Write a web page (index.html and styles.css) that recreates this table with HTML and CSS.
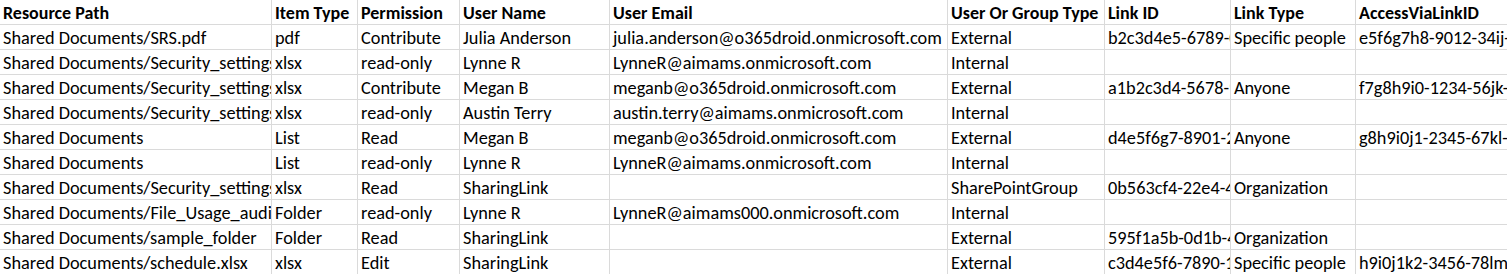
FILE: index.html
```html
<!DOCTYPE html>
<html lang="en">
<head>
    <meta charset="UTF-8">
    <title>Sharing Report</title>
    <link rel="stylesheet" href="styles.css">
</head>
<body>
    <table class="sheet">
        <colgroup>
            <col class="c-path">
            <col class="c-type">
            <col class="c-perm">
            <col class="c-name">
            <col class="c-email">
            <col class="c-group">
            <col class="c-link">
            <col class="c-ltype">
            <col class="c-access">
        </colgroup>
        <thead>
            <tr>
                <th>Resource Path</th>
                <th>Item Type</th>
                <th>Permission</th>
                <th>User Name</th>
                <th>User Email</th>
                <th>User Or Group Type</th>
                <th>Link ID</th>
                <th>Link Type</th>
                <th>AccessViaLinkID</th>
            </tr>
        </thead>
        <tbody>
            <tr>
                <td>Shared Documents/SRS.pdf</td>
                <td>pdf</td>
                <td>Contribute</td>
                <td>Julia Anderson</td>
                <td>julia.anderson@o365droid.onmicrosoft.com</td>
                <td>External</td>
                <td>b2c3d4e5-6789-0abc</td>
                <td>Specific people</td>
                <td>e5f6g7h8-9012-34ij-56kl</td>
            </tr>
            <tr>
                <td>Shared Documents/Security_settings</td>
                <td>xlsx</td>
                <td>read-only</td>
                <td>Lynne R</td>
                <td>LynneR@aimams.onmicrosoft.com</td>
                <td>Internal</td>
                <td></td>
                <td></td>
                <td></td>
            </tr>
            <tr>
                <td>Shared Documents/Security_settings</td>
                <td>xlsx</td>
                <td>Contribute</td>
                <td>Megan B</td>
                <td>meganb@o365droid.onmicrosoft.com</td>
                <td>External</td>
                <td>a1b2c3d4-5678-90ab</td>
                <td>Anyone</td>
                <td>f7g8h9i0-1234-56jk-78lm</td>
            </tr>
            <tr>
                <td>Shared Documents/Security_settings</td>
                <td>xlsx</td>
                <td>read-only</td>
                <td>Austin Terry</td>
                <td>austin.terry@aimams.onmicrosoft.com</td>
                <td>Internal</td>
                <td></td>
                <td></td>
                <td></td>
            </tr>
            <tr>
                <td>Shared Documents</td>
                <td>List</td>
                <td>Read</td>
                <td>Megan B</td>
                <td>meganb@o365droid.onmicrosoft.com</td>
                <td>External</td>
                <td>d4e5f6g7-8901-2345</td>
                <td>Anyone</td>
                <td>g8h9i0j1-2345-67kl-89mn</td>
            </tr>
            <tr>
                <td>Shared Documents</td>
                <td>List</td>
                <td>read-only</td>
                <td>Lynne R</td>
                <td>LynneR@aimams.onmicrosoft.com</td>
                <td>Internal</td>
                <td></td>
                <td></td>
                <td></td>
            </tr>
            <tr>
                <td>Shared Documents/Security_settings</td>
                <td>xlsx</td>
                <td>Read</td>
                <td>SharingLink</td>
                <td></td>
                <td>SharePointGroup</td>
                <td>0b563cf4-22e4-4c1f</td>
                <td>Organization</td>
                <td></td>
            </tr>
            <tr>
                <td>Shared Documents/File_Usage_audit</td>
                <td>Folder</td>
                <td>read-only</td>
                <td>Lynne R</td>
                <td>LynneR@aimams000.onmicrosoft.com</td>
                <td>Internal</td>
                <td></td>
                <td></td>
                <td></td>
            </tr>
            <tr>
                <td>Shared Documents/sample_folder</td>
                <td>Folder</td>
                <td>Read</td>
                <td>SharingLink</td>
                <td></td>
                <td>External</td>
                <td>595f1a5b-0d1b-4e2c</td>
                <td>Organization</td>
                <td></td>
            </tr>
            <tr>
                <td>Shared Documents/schedule.xlsx</td>
                <td>xlsx</td>
                <td>Edit</td>
                <td>SharingLink</td>
                <td></td>
                <td>External</td>
                <td>c3d4e5f6-7890-1234</td>
                <td>Specific people</td>
                <td>h9i0j1k2-3456-78lm-90no</td>
            </tr>
        </tbody>
    </table>
</body>
</html>
```

FILE: styles.css
```css
* {
    margin: 0;
    padding: 0;
    box-sizing: border-box;
}

body {
    font-family: Carlito, Calibri, Lato, sans-serif;
    font-size: 18.3px;
    color: #000;
    background: #fff;
    overflow: hidden;
}

.sheet {
    table-layout: fixed;
    border-collapse: separate;
    border-spacing: 0;
    width: 1512px;
}

.c-path { width: 272px; }
.c-type { width: 86px; }
.c-perm { width: 102px; }
.c-name { width: 150px; }
.c-email { width: 338px; }
.c-group { width: 157px; }
.c-link { width: 126px; }
.c-ltype { width: 125px; }
.c-access { width: 156px; }

.sheet th,
.sheet td {
    height: 25px;
    padding: 0 0 0 3px;
    border-right: 1px solid #dadada;
    border-bottom: 1px solid #dadada;
    text-align: left;
    vertical-align: bottom;
    white-space: nowrap;
    overflow: hidden;
    text-overflow: clip;
    line-height: 22px;
}

.sheet th {
    font-weight: bold;
    font-size: 18px;
}
```
